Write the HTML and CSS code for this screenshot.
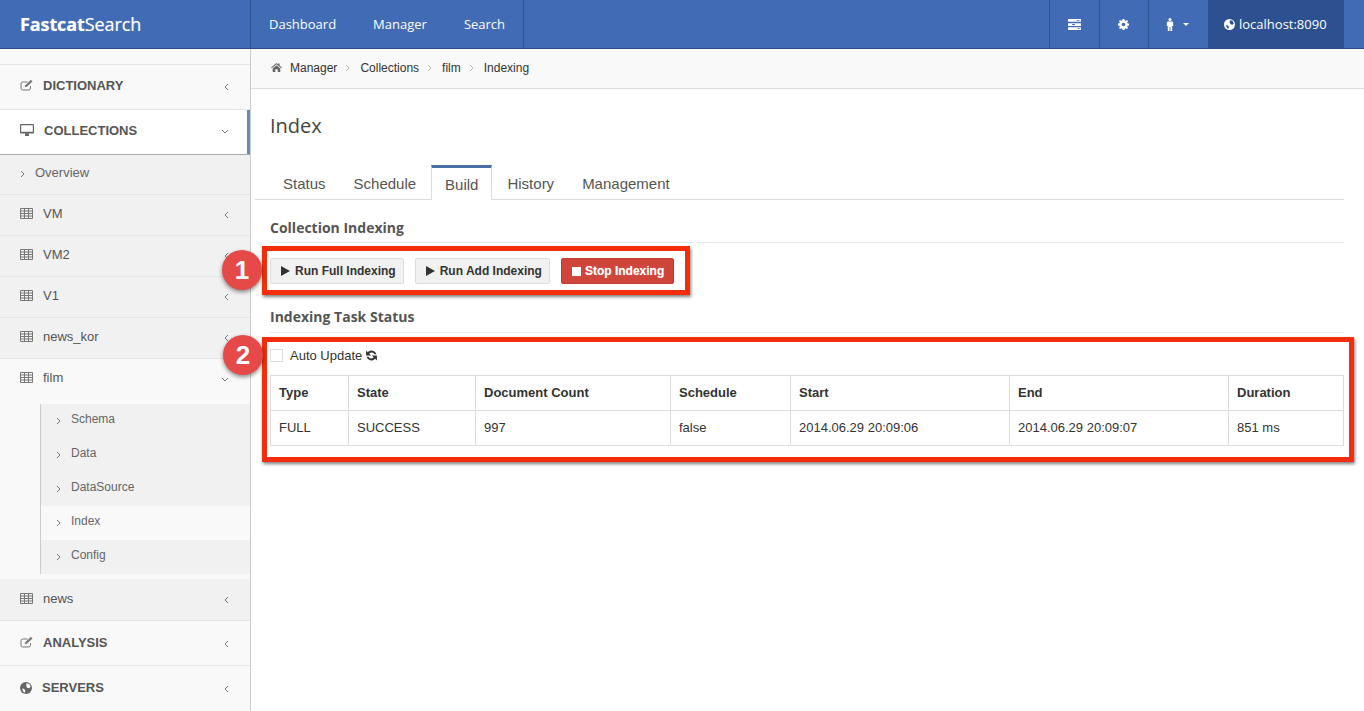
FILE: index.html
```html
<!DOCTYPE html>
<html lang="en">
<head>
<meta charset="utf-8">
<title>FastcatSearch</title>
<link rel="stylesheet" href="styles.css">
</head>
<body>
<svg class="defs" width="0" height="0" aria-hidden="true">
  <symbol id="i-edit" viewBox="0 0 14 12"><path d="M10.500 7v2.200A1.800 1.800 0 0 1 8.700 11H2.800A1.800 1.800 0 0 1 1 9.200V4.800A1.800 1.800 0 0 1 2.800 3H7.500" fill="none" stroke="currentColor" stroke-width="1"/><path d="M4.800 8.300l.5-2.100L10.900.8l1.600 1.600-5.600 5.400z" fill="currentColor"/></symbol>
  <symbol id="i-desktop" viewBox="0 0 14 12"><path fill-rule="evenodd" d="M1 0h12a1 1 0 0 1 1 1v7.500a1 1 0 0 1-1 1H8.500l.5 1.500v1H5v-1l.5-1.500H1a1 1 0 0 1-1-1V1a1 1 0 0 1 1-1zm.2 1.200v6.600h11.600V1.200z" fill="currentColor"/></symbol>
  <symbol id="i-table" viewBox="0 0 13 11"><path d="M.5 .5h12v10H.5zM.5 3h12M.5 5.500h12M.5 8h12M4.500 .5v10M8.500 .5v10" fill="none" stroke="currentColor" stroke-width="1"/></symbol>
  <symbol id="i-globe" viewBox="0 0 12 12"><circle cx="6" cy="6" r="6" fill="currentColor"/><path d="M6.500 1.300l2.800.6 1.400 2.900-1.500 1.500-2-.6-1-1.700zM2 6.500l2.300.5 1 1.500-.4 2.200-1.400-.6z" fill="var(--globe-land)"/></symbol>
  <symbol id="i-home" viewBox="0 0 12 10"><path d="M6 0l2 1.700V.6h1.400v2.300L12 5l-.7.800L6 1.500.7 5.800 0 5zM1.800 6L6 2.600 10.200 6v4H7.300V7H4.700v3H1.800z" fill="currentColor"/></symbol>
  <symbol id="i-refresh" viewBox="0 0 12 12"><path d="M10.500 4.800A4.700 4.700 0 0 0 2.600 2.900L1 1.300V6h4.700L3.900 4.300a3 3 0 0 1 4.900.5zM1.500 7.200A4.700 4.700 0 0 0 9.400 9.100L11 10.700V6H6.300l1.800 1.700a3 3 0 0 1-4.900-.5z" fill="currentColor"/></symbol>
  <symbol id="i-play" viewBox="0 0 9 10"><path d="M0 0l9 5-9 5z" fill="currentColor"/></symbol>
  <symbol id="i-male" viewBox="0 0 8 13"><circle cx="4" cy="1.500" r="1.500" fill="currentColor"/><path d="M2 3.500h4A1.200 1.200 0 0 1 7.200 4.700V8H6.200V13H4.400V9H3.600V13H1.800V8H.8V4.700A1.200 1.200 0 0 1 2 3.500z" fill="currentColor"/></symbol>
  <symbol id="i-cog" viewBox="0 0 12 12"><path fill-rule="evenodd" d="M5 0h2l.3 1.600 1.100.5L9.800 1.200l1.100 1.100-.9 1.400.5 1.100L12 5v2l-1.500.3-.5 1.100.9 1.400-1.100 1.100-1.400-.9-1.100.5L7 12H5l-.3-1.500-1.100-.5-1.400.9-1.100-1.100.9-1.400-.5-1.100L0 7V5l1.500-.3.5-1.100-.9-1.400 1.100-1.100 1.400.9 1.100-.5zM6 4a2 2 0 1 0 0 4 2 2 0 0 0 0-4z" fill="currentColor"/></symbol>
  <symbol id="i-tasks" viewBox="0 0 14 12"><path d="M0 0h14v3H0zM0 4.500h14v3H0zM0 9h14v3H0z" fill="currentColor"/><path d="M9.500 1h3v1h-3zM4.500 5.500h3v1h-3zM10.500 10h2v1h-2z" fill="#416bb5"/></symbol>
  <symbol id="i-left" viewBox="0 0 5 8"><path d="M4 1L1 4l3 3" fill="none" stroke="currentColor" stroke-width="1"/></symbol>
  <symbol id="i-down" viewBox="0 0 8 5"><path d="M1 1l3 3 3-3" fill="none" stroke="currentColor" stroke-width="1"/></symbol>
  <symbol id="i-right" viewBox="0 0 5 8"><path d="M1 1l3 3-3 3" fill="none" stroke="currentColor" stroke-width="1"/></symbol>
</svg>

<header class="topbar">
  <a class="brand"><b>Fastcat</b>Search</a>
  <nav class="topnav">
    <a class="topnav-item">Dashboard</a>
    <a class="topnav-item">Manager</a>
    <a class="topnav-item topnav-last">Search</a>
  </nav>
  <div class="top-tools">
    <a class="tool tool-tasks"><svg class="ic-tasks"><use href="#i-tasks"/></svg></a>
    <a class="tool tool-cog"><svg class="ic-cog"><use href="#i-cog"/></svg></a>
    <a class="tool tool-user"><svg class="ic-male"><use href="#i-male"/></svg><span class="caret"></span></a>
    <a class="host"><svg class="ic-globe-top"><use href="#i-globe"/></svg>localhost:8090</a>
  </div>
</header>

<div class="layout">
  <aside class="sidebar">
    <a class="side-row side-top side-first"><svg class="ic-side"><use href="#i-edit"/></svg><span class="side-label">DICTIONARY</span><svg class="chev-left"><use href="#i-left"/></svg></a>
    <a class="side-row side-top side-active"><svg class="ic-side"><use href="#i-desktop"/></svg><span class="side-label side-label-wide">COLLECTIONS</span><svg class="chev-down"><use href="#i-down"/></svg></a>
    <a class="side-row side-sub side-overview"><svg class="chev-right"><use href="#i-right"/></svg><span class="side-text-over">Overview</span></a>
    <a class="side-row side-sub"><svg class="ic-side ic-table"><use href="#i-table"/></svg><span>VM</span><svg class="chev-left"><use href="#i-left"/></svg></a>
    <a class="side-row side-sub"><svg class="ic-side ic-table"><use href="#i-table"/></svg><span>VM2</span><svg class="chev-left"><use href="#i-left"/></svg></a>
    <a class="side-row side-sub"><svg class="ic-side ic-table"><use href="#i-table"/></svg><span>V1</span><svg class="chev-left"><use href="#i-left"/></svg></a>
    <a class="side-row side-sub"><svg class="ic-side ic-table"><use href="#i-table"/></svg><span>news_kor</span><svg class="chev-left"><use href="#i-left"/></svg></a>
    <a class="side-row side-sub side-open"><svg class="ic-side ic-table"><use href="#i-table"/></svg><span>film</span><svg class="chev-down"><use href="#i-down"/></svg></a>
    <div class="submenu-wrap">
      <ul class="submenu">
        <li class="submenu-item"><svg class="chev-right"><use href="#i-right"/></svg>Schema</li>
        <li class="submenu-item"><svg class="chev-right"><use href="#i-right"/></svg>Data</li>
        <li class="submenu-item"><svg class="chev-right"><use href="#i-right"/></svg>DataSource</li>
        <li class="submenu-item submenu-current"><svg class="chev-right"><use href="#i-right"/></svg>Index</li>
        <li class="submenu-item"><svg class="chev-right"><use href="#i-right"/></svg>Config</li>
      </ul>
    </div>
    <a class="side-row side-sub side-news"><svg class="ic-side ic-table"><use href="#i-table"/></svg><span>news</span><svg class="chev-left"><use href="#i-left"/></svg></a>
    <a class="side-row side-top side-low"><svg class="ic-side"><use href="#i-edit"/></svg><span class="side-label">ANALYSIS</span><svg class="chev-left"><use href="#i-left"/></svg></a>
    <a class="side-row side-top side-low side-servers"><svg class="ic-side ic-globe-side"><use href="#i-globe"/></svg><span class="side-label">SERVERS</span><svg class="chev-left"><use href="#i-left"/></svg></a>
  </aside>

  <main class="main">
    <div class="breadcrumb">
      <svg class="ic-home"><use href="#i-home"/></svg>
      <span>Manager</span><svg class="crumb-sep"><use href="#i-right"/></svg>
      <span>Collections</span><svg class="crumb-sep"><use href="#i-right"/></svg>
      <span>film</span><svg class="crumb-sep"><use href="#i-right"/></svg>
      <span>Indexing</span>
    </div>
    <div class="content">
      <h1 class="page-title">Index</h1>
      <ul class="tabs">
        <li class="tab">Status</li>
        <li class="tab">Schedule</li>
        <li class="tab tab-active">Build</li>
        <li class="tab">History</li>
        <li class="tab">Management</li>
      </ul>
      <h2 class="section-title">Collection Indexing</h2>
      <div class="btn-row">
        <button class="btn"><svg class="ic-play"><use href="#i-play"/></svg>Run Full Indexing</button>
        <button class="btn"><svg class="ic-play"><use href="#i-play"/></svg>Run Add Indexing</button>
        <button class="btn btn-danger"><span class="ic-stop"></span>Stop Indexing</button>
      </div>
      <h2 class="section-title section-title-2">Indexing Task Status</h2>
      <div class="auto-row">
        <span class="checkbox"></span>
        <span>Auto Update</span>
        <svg class="ic-refresh"><use href="#i-refresh"/></svg>
      </div>
      <table class="grid">
        <colgroup>
          <col class="c-type"><col class="c-state"><col class="c-doc"><col class="c-sched"><col class="c-time"><col class="c-time"><col class="c-dur">
        </colgroup>
        <thead>
          <tr><th>Type</th><th>State</th><th>Document Count</th><th>Schedule</th><th>Start</th><th>End</th><th>Duration</th></tr>
        </thead>
        <tbody>
          <tr><td>FULL</td><td>SUCCESS</td><td>997</td><td>false</td><td>2014.06.29 20:09:06</td><td>2014.06.29 20:09:07</td><td>851 ms</td></tr>
        </tbody>
      </table>
    </div>
  </main>
</div>

<div class="mark-box mark-box-1"></div>
<div class="mark-box mark-box-2"></div>
<div class="mark-dot mark-dot-1">1</div>
<div class="mark-dot mark-dot-2">2</div>
</body>
</html>
```

FILE: styles.css
```css
* { box-sizing: border-box; }
html, body { margin: 0; padding: 0; height: 711px; overflow: hidden; }
body {
  font-family: "Liberation Sans", Arial, sans-serif;
  font-size: 13px;
  color: #333;
  background: #fff;
  position: relative;
}
.defs { position: absolute; }
ul { list-style: none; margin: 0; padding: 0; }
svg { display: block; flex: none; }

/* Top bar */
.topbar {
  height: 49px;
  display: flex;
  background: #416bb5;
  border-bottom: 1px solid #2c4a80;
  color: #fff;
  font-family: "Open Sans", sans-serif;
  --globe-land: #416bb5;
}
.brand {
  width: 250px;
  padding-left: 20px;
  font-size: 18px;
  line-height: 48px;
  text-shadow: 0 0 1px rgba(255,255,255,.5);
  letter-spacing: -.1px;
}
.brand b { font-weight: 700; }
.topnav { display: flex; border-left: 1px solid #2f5595; }
.topnav-item {
  padding: 0 18px;
  font-size: 13px;
  line-height: 48px;
  border-right: 1px solid #416bb5;
}
.topnav-last { border-right: 1px solid #2f5595; }
.top-tools { margin-left: auto; display: flex; padding-right: 20px; }
.tool {
  display: flex;
  align-items: center;
  justify-content: center;
  border-left: 1px solid #2f5595;
  height: 48px;
}
.tool-tasks { width: 50px; }
.tool-cog { width: 49px; padding-right: 1px; }
.tool-user { width: 60px; gap: 9px; padding-right: 3px; }
.ic-tasks { width: 13px; height: 11px; }
.ic-cog { width: 11px; height: 11px; }
.ic-male { width: 8px; height: 13px; }
.caret {
  width: 0;
  height: 0;
  border-left: 3.500px solid transparent;
  border-right: 3.500px solid transparent;
  border-top: 3.500px solid #fff;
}
.host {
  width: 136px;
  background: #2c5090;
  display: flex;
  align-items: center;
  padding-left: 16px;
  gap: 4px;
  font-size: 13px;
  height: 48px;
  --globe-land: #2c5090;
}
.ic-globe-top { width: 11px; height: 11px; }

/* Layout */
.layout { display: flex; height: 662px; }

/* Sidebar */
.sidebar {
  width: 251px;
  flex: none;
  background: #f9f9f9;
  border-right: 1px solid #ccc;
  padding-top: 15px;
  color: #555;
  --globe-land: #f9f9f9;
}
.side-row {
  display: flex;
  align-items: center;
  padding: 0 20px 4px;
  position: relative;
}
.side-top {
  height: 45px;
  border-bottom: 1px solid #e6e6e6;
  font-weight: 700;
  font-size: 13px;
  color: #555;
  background: #f9f9f9;
}
.side-first { border-top: 1px solid #e6e6e6; height: 46px; }
.side-low { padding-bottom: 2px; }
.side-servers { border-bottom: 0; }
.side-active {
  background: #fff;
  border-bottom: 1px solid #aaa;
  box-shadow: inset -3px 0 0 #6b8cad;
}
.side-sub {
  height: 41px;
  background: #f1f1f1;
  border-bottom: 1px solid #e6e6e6;
  font-size: 13px;
  color: #555;
  padding-bottom: 4px;
}
.side-overview { height: 40px; padding-bottom: 4px; color: #666; }
.side-open { background: #f9f9f9; border-bottom: 0; padding-bottom: 4px; }
.side-news { height: 42px; padding-bottom: 2px; }
.ic-side { width: 14px; height: 12px; margin-right: 9px; color: #777; }
.ic-table { width: 13px; height: 11px; margin-right: 10px; }
.ic-globe-side { width: 12px; height: 12px; margin-right: 10px; color: #666; --globe-land: #f9f9f9; }
.side-active .ic-side { color: #666; }
.side-label-wide { margin-left: 1px; }
.chev-left { width: 5px; height: 8px; margin: 3px 1px 0 auto; color: #777; }
.chev-down { width: 8px; height: 5px; margin: 3px 1px 0 auto; color: #777; }
.chev-right { width: 5px; height: 8px; color: #777; }
.side-text-over { margin-left: 10px; }
.side-overview .chev-right { margin-top: 3px; }

.submenu-wrap { padding: 4px 0 5px 40px; background: #f9f9f9; }
.submenu { border-left: 1px solid #ccc; }
.submenu-item {
  height: 34px;
  background: #f1f1f1;
  display: flex;
  align-items: center;
  gap: 10px;
  padding: 0 0 4px 15px;
  font-size: 12px;
  color: #666;
}
.submenu-item .chev-right { margin-top: 3px; }
.submenu-current { background: #f9f9f9; }

/* Main */
.main { flex: 1; min-width: 0; }
.breadcrumb {
  height: 40px;
  background: #f9f9f9;
  border-bottom: 1px solid #ddd;
  display: flex;
  align-items: center;
  padding: 0 0 2px 20px;
  font-size: 12px;
  color: #333;
}
.ic-home { width: 11px; height: 9px; margin-right: 8px; color: #666; }
.crumb-sep { width: 5px; height: 8px; margin: 0 10px 0 8px; color: #bbb; }
.content { padding: 0 20px 0 19px; }
.page-title {
  margin: 0;
  height: 76px;
  padding-top: 23px;
  font: 400 20px/28px "Open Sans", sans-serif;
  color: #444;
}
.tabs {
  display: flex;
  height: 35px;
  margin-left: -15px;
  padding-left: 14px;
  border-bottom: 1px solid #ddd;
}
.tab {
  padding: 0 14px;
  font-size: 15px;
  line-height: 38px;
  color: #555;
}
.tab-active {
  height: 35px;
  padding: 0 13px;
  background: #fff;
  border: 1px solid #ddd;
  border-top: 3px solid #4a6fa5;
  border-bottom: 0;
  line-height: 33px;
  margin: 0 1px 0 1px;
}
.section-title {
  margin: 0;
  height: 43px;
  padding-top: 18px;
  border-bottom: 1px solid #e8e8e8;
  font: 700 14px/19px "Open Sans", sans-serif;
  color: #555;
}
.section-title-2 { height: 44px; }
.btn-row { display: flex; gap: 11px; padding-top: 15px; height: 46px; }
.btn {
  height: 26px;
  display: flex;
  align-items: center;
  gap: 5px;
  padding: 0 7px 0 10px;
  background: #f1f1f1;
  border: 1px solid #ddd;
  border-radius: 2px;
  font: 700 12px "Liberation Sans", Arial, sans-serif;
  color: #333;
}
.btn-danger {
  background: #d0453b;
  border-color: #c23b32;
  color: #fff;
  padding: 0 9px 0 10px;
  text-shadow: 0 0 1px rgba(255,255,255,.4);
  gap: 4px;
}
.ic-play { width: 9px; height: 10px; color: #333; }
.ic-stop { width: 9px; height: 9px; background: #fff; }
.auto-row {
  display: flex;
  align-items: center;
  height: 42px;
  padding-top: 2px;
  font-size: 13px;
  color: #333;
}
.checkbox {
  width: 13px;
  height: 13px;
  border: 1px solid #ddd;
  background: #fff;
  margin-right: 7px;
}
.ic-refresh { width: 13px; height: 13px; margin-left: 3px; color: #333; }
.grid {
  width: 1073px;
  table-layout: fixed;
  border-collapse: collapse;
  font-size: 13px;
}
.c-type { width: 78px; }
.c-state { width: 127px; }
.c-doc { width: 195px; }
.c-sched { width: 120px; }
.c-time { width: 219px; }
.c-dur { width: 115px; }
.grid th, .grid td {
  height: 35px;
  padding: 0 8px 2px;
  border: 1px solid #ddd;
  text-align: left;
  color: #333;
}
.grid th { font-weight: 700; }

/* Annotations */
.mark-box {
  position: absolute;
  border: 5px solid #f42e0b;
  box-shadow: 1px 2px 3px rgba(0,0,0,.5);
}
.mark-box-1 { left: 262px; top: 246px; width: 428px; height: 49px; }
.mark-box-2 { left: 262px; top: 337px; width: 1092px; height: 125px; }
.mark-dot {
  position: absolute;
  width: 40px;
  height: 40px;
  border-radius: 50%;
  background: #e64a48;
  color: #fff;
  font: 700 26px/40px "Liberation Sans", Arial, sans-serif;
  text-align: center;
  box-shadow: 0 2px 4px rgba(0,0,0,.45);
}
.mark-dot-1 { left: 222px; top: 250px; }
.mark-dot-2 { left: 223px; top: 335px; }
```
